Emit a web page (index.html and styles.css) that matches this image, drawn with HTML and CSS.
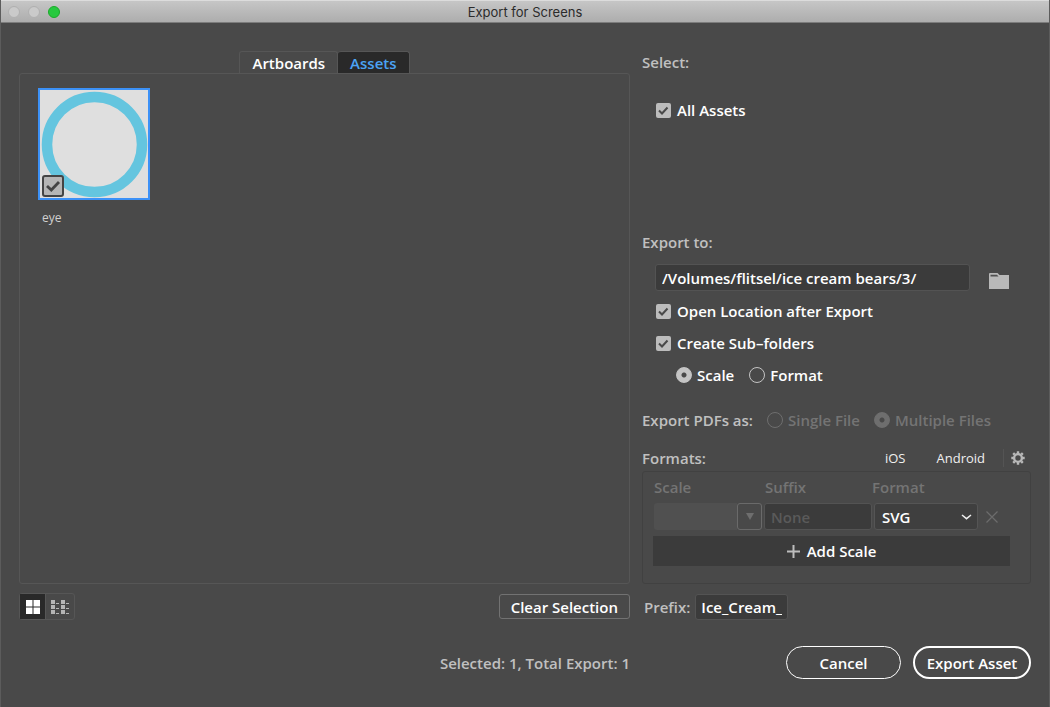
FILE: index.html
```
<!DOCTYPE html>
<html lang="en">
<head>
<meta charset="utf-8">
<title>Export for Screens</title>
<link rel="stylesheet" href="styles.css">
</head>
<body>
<div class="window">
  <header class="titlebar">
    <div class="lights">
      <button class="light" type="button" aria-label="Close"></button>
      <button class="light" type="button" aria-label="Minimize"></button>
      <button class="light light-zoom" type="button" aria-label="Zoom"></button>
    </div>
    <h1 class="title">Export for Screens</h1>
  </header>

  <main class="content">
    <section class="assets">
      <div class="tabs" role="tablist">
        <button class="tab" type="button" role="tab" aria-selected="false">Artboards</button>
        <button class="tab tab-active" type="button" role="tab" aria-selected="true">Assets</button>
      </div>
      <div class="asset-panel" role="tabpanel">
        <div class="asset">
          <div class="thumb">
            <svg class="thumb-art" viewBox="0 0 108 108" aria-hidden="true"><circle cx="54.500" cy="54.500" r="47.500" fill="none" stroke="#64c5df" stroke-width="10.500"/></svg>
            <span class="thumb-check">
              <input type="checkbox" id="eye" checked>
              <svg viewBox="0 0 22 22" aria-hidden="true"><path d="M5 11 L9.300 15 L17 7" fill="none" stroke="#444" stroke-width="2.800"/></svg>
            </span>
          </div>
          <label class="asset-name" for="eye">eye</label>
        </div>
      </div>
      <div class="assets-bar">
        <div class="views">
          <button class="view view-active" type="button" aria-label="Thumbnail view">
            <svg width="16" height="16" viewBox="0 0 16 16" aria-hidden="true"><path d="M1 1h6.500v6.500H1zM8.500 1H15v6.500H8.500zM1 8.500h6.500V15H1zM8.500 8.500H15V15H8.500z" fill="#fff"/></svg>
          </button>
          <button class="view" type="button" aria-label="List view">
            <svg width="20" height="16" viewBox="0 0 20 16" aria-hidden="true"><path d="M1 1h4v4H1zM1 6h4v4H1zM1 11h4v4H1zM11 1h4v4h-4zM11 6h4v4h-4zM11 11h4v4h-4zM6 4h3v1H6zM6 9h3v1H6zM6 14h3v1H6zM16 4h3v1h-3zM16 9h3v1h-3zM16 14h3v1h-3z" fill="#b5b5b5"/></svg>
          </button>
        </div>
        <button class="clear" type="button">Clear Selection</button>
      </div>
    </section>

    <section class="settings">
      <h2 class="heading">Select:</h2>
      <div class="select-options">
        <label class="option"><span class="check"><input type="checkbox" checked><svg viewBox="0 0 15 15" aria-hidden="true"><path d="M3 7.500 L6 10.500 L11.500 4.500"/></svg></span>All Assets</label>
      </div>

      <label class="heading" for="path">Export to:</label>
      <div class="path-row">
        <input class="field path" id="path" type="text" value="/Volumes/flitsel/ice cream bears/3/">
        <button class="folder" type="button" aria-label="Choose folder">
          <svg width="20" height="18" viewBox="0 0 20 18" aria-hidden="true"><path d="M0 2Q0 1 1 1H8.500L10.500 3H20V17H0Z" fill="#b9b9b9"/><path d="M1.500 2.800H8L9.500 4.600H1.500Z" fill="#505050"/></svg>
        </button>
      </div>
      <div class="export-options">
        <label class="option"><span class="check"><input type="checkbox" checked><svg viewBox="0 0 15 15" aria-hidden="true"><path d="M3 7.500 L6 10.500 L11.500 4.500"/></svg></span>Open Location after Export</label>
        <label class="option"><span class="check"><input type="checkbox" checked><svg viewBox="0 0 15 15" aria-hidden="true"><path d="M3 7.500 L6 10.500 L11.500 4.500"/></svg></span>Create Sub–folders</label>
        <div class="folder-kind">
          <label class="choice"><input class="radio" type="radio" name="kind" checked>Scale</label>
          <label class="choice"><input class="radio" type="radio" name="kind">Format</label>
        </div>
      </div>

      <div class="pdf-row">
        <span class="heading">Export PDFs as:</span>
        <label class="choice choice-off"><input class="radio" type="radio" name="pdf" disabled>Single File</label>
        <label class="choice choice-off"><input class="radio" type="radio" name="pdf" checked disabled>Multiple Files</label>
      </div>

      <div class="formats-head">
        <h2 class="heading">Formats:</h2>
        <div class="presets">
          <button class="preset" type="button">iOS</button>
          <button class="preset" type="button">Android</button>
          <button class="gear" type="button" aria-label="Advanced settings">
            <svg width="14" height="14" viewBox="-7 -7 14 14" aria-hidden="true"><circle r="3.900" fill="none" stroke="#b9b9b9" stroke-width="2.400"/><path d="M0-4.500V-6.700M0 4.500V6.700M-4.500 0H-6.700M4.500 0H6.700M-3.300-3.300L-4.800-4.800M3.300-3.300L4.800-4.800M-3.300 3.300L-4.800 4.800M3.300 3.300L4.800 4.800" stroke="#b9b9b9" stroke-width="2.400"/></svg>
          </button>
        </div>
      </div>
      <div class="formats">
        <div class="columns">
          <label for="scale">Scale</label>
          <label for="suffix">Suffix</label>
          <label for="format">Format</label>
        </div>
        <div class="format-row">
          <div class="scale">
            <input class="scale-value" id="scale" type="text" disabled>
            <button class="scale-menu" type="button" aria-label="Scale presets" disabled>
              <svg width="8" height="7" viewBox="0 0 8 7" aria-hidden="true"><path d="M0 0H8L4 7Z" fill="#6e6e6e"/></svg>
            </button>
          </div>
          <input class="field suffix" id="suffix" type="text" placeholder="None" disabled>
          <div class="format">
            <select class="format-select" id="format"><option>SVG</option></select>
            <svg class="chevron" width="11" height="6" viewBox="0 0 11 6" aria-hidden="true"><path d="M1 1L5.500 4.700L10 1" fill="none" stroke="#eee" stroke-width="1.500"/></svg>
          </div>
          <button class="remove" type="button" aria-label="Remove scale" disabled>
            <svg width="12" height="12" viewBox="0 0 12 12" aria-hidden="true"><path d="M0.500 0.500L11.500 11.500M11.500 0.500L0.500 11.500" stroke="#6c6c6c" stroke-width="1.200"/></svg>
          </button>
        </div>
        <button class="add" type="button">
          <svg width="13" height="13" viewBox="0 0 13 13" aria-hidden="true"><path d="M6.500 0V13M0 6.500H13" stroke="#bdbdbd" stroke-width="2"/></svg>
          Add Scale
        </button>
      </div>
      <div class="prefix-row">
        <label class="heading" for="prefix">Prefix:</label>
        <input class="field prefix" id="prefix" type="text" value="Ice_Cream_">
      </div>
    </section>
  </main>

  <footer class="footer">
    <p class="status">Selected: 1, Total Export: 1</p>
    <div class="actions">
      <button class="pill" type="button">Cancel</button>
      <button class="pill pill-primary" type="button">Export Asset</button>
    </div>
  </footer>
</div>
</body>
</html>
```
FILE: styles.css
```
* { box-sizing: border-box; }

body {
  margin: 0;
  background: #494949;
  color: #fff;
  font: 600 15px/20px "Open Sans", "Noto Sans", sans-serif;
}

button, input, select {
  margin: 0;
  padding: 0;
  border: 0;
  border-radius: 0;
  background: none;
  color: inherit;
  font: inherit;
}

svg { display: block; }

.window {
  display: flex;
  flex-direction: column;
  min-height: 100vh;
  border: solid #5c5c5c;
  border-width: 0 1px;
}

.titlebar {
  display: grid;
  grid-template-columns: 1fr auto 1fr;
  align-items: center;
  height: 23px;
  padding: 0 7px;
  border-top: 1px solid #dcdcdc;
  border-bottom: 1px solid #7c7c7c;
  background: linear-gradient(#c6c6c6, #adadad);
}

.lights { display: flex; gap: 8px; }

.light {
  width: 12px;
  height: 12px;
  border: 1px solid #b0b0b0;
  border-radius: 50%;
  background: #cacaca;
}

.light-zoom { border-color: #1aab29; background: #27c93f; }

.title {
  margin: 0;
  color: #2b2b2b;
  font: 400 13px/20px Inter, sans-serif;
}

.content {
  display: grid;
  flex: 1;
  grid-template-columns: minmax(0, 1fr) 389px;
  gap: 12px;
  padding: 28px 18px 0;
}

.assets, .settings { display: flex; flex-direction: column; }

.tabs { display: flex; justify-content: center; }

.tab {
  height: 22px;
  padding: 1px 12px 0;
  border: 1px solid #565656;
  border-bottom: 0;
  border-radius: 3px 3px 0 0;
}

.tab-active { border-left: 0; background: #292929; color: #4ba3f5; }

.asset-panel {
  flex: 1;
  padding: 14px 18px;
  border: 1px solid #565656;
  border-radius: 3px;
}

.asset { display: flex; flex-direction: column; width: 112px; }

.thumb {
  position: relative;
  height: 112px;
  border: 2px solid #3c91f7;
  background: #dfdfdf;
}

.thumb-art { width: 108px; height: 108px; }

.thumb-check {
  position: absolute;
  bottom: 1px;
  left: 2px;
  display: grid;
  width: 22px;
  height: 22px;
}

.thumb-check > *, .check > * { grid-area: 1 / 1; }

.thumb-check input {
  border: 2px solid #444;
  border-radius: 3px;
  appearance: none;
  background: #b5b5b5;
}

.thumb-check svg, .check svg { pointer-events: none; }

.asset-name {
  margin-top: 8px;
  padding-left: 4px;
  color: #d0d0d0;
  font-size: 12px;
  font-weight: 400;
}

.assets-bar {
  display: flex;
  align-items: center;
  justify-content: space-between;
  height: 27px;
  margin-top: 9px;
}

.views {
  display: flex;
  height: 27px;
  border: 1px solid #565656;
  border-radius: 3px;
}

.view { display: grid; place-items: center; width: 28px; }

.view-active { width: 26px; border-right: 1px solid #565656; background: #292929; }

.clear {
  height: 25px;
  padding: 0 11px;
  border: 1px solid #727272;
  border-radius: 3px;
}

.heading {
  margin: 0;
  color: #c0c0c0;
  font: inherit;
}

.select-options { margin: 28px 0 112px 14px; }

.settings > h2 { margin-top: 1px; }

.option { display: flex; align-items: center; gap: 6px; }

.check { display: grid; width: 15px; height: 15px; }

.check input { border-radius: 2px; appearance: none; background: #bcbcbc; }

.check path { fill: none; stroke: #494949; stroke-width: 2; }

.path-row {
  display: flex;
  align-items: center;
  justify-content: space-between;
  margin: 12px 22px 0 13px;
}

.field {
  height: 27px;
  min-width: 0;
  padding: 0 6px;
  border: 1px solid #535353;
  border-radius: 3px;
  background: #3b3b3b;
}

.path { flex: 1; margin-right: 19px; }

.folder { padding-top: 6px; }

.export-options {
  display: flex;
  flex-direction: column;
  gap: 12px;
  margin: 10px 0 0 14px;
}

.folder-kind { display: flex; gap: 15px; padding-left: 20px; }

.choice { display: flex; align-items: center; gap: 5px; }

.radio {
  width: 16px;
  height: 16px;
  border: 1px solid #c4c4c4;
  border-radius: 50%;
  appearance: none;
}

.radio:checked {
  background: radial-gradient(circle, #494949 0 2px, #c4c4c4 3px);
}

.choice-off { color: #747474; }

.radio:disabled { border-color: #6e6e6e; }

.radio:disabled:checked {
  background: radial-gradient(circle, #494949 0 2px, #6e6e6e 3px);
}

.pdf-row { display: flex; gap: 14px; margin-top: 25px; }

.formats-head { display: flex; justify-content: space-between; margin-top: 18px; }

.presets { display: flex; align-items: center; padding-right: 6px; }

.preset { margin-right: 31px; color: #f0f0f0; font-size: 13px; font-weight: 400; }

.preset + .preset { margin-right: 18px; }

.gear { height: 18px; padding-left: 7px; border-left: 1px solid #545454; }

.formats {
  height: 113px;
  margin-top: 3px;
  padding: 5px 20px 0 10px;
  border: 1px solid #414141;
  border-radius: 3px;
}

.columns {
  display: grid;
  grid-template-columns: 111px 107px 1fr;
  padding-left: 1px;
  color: #747474;
}

.format-row {
  display: grid;
  grid-template-columns: 108px 108px 104px 1fr;
  gap: 2px;
  margin-top: 6px;
  padding-left: 1px;
}

.scale { display: flex; min-width: 0; height: 27px; }

.scale-value { flex: 1; min-width: 0; border-radius: 3px 0 0 3px; background: #505050; }

.scale-menu {
  display: grid;
  place-items: center;
  width: 25px;
  border: 1px solid #6a6a6a;
  border-radius: 3px;
}

.suffix::placeholder { color: #5a5a5a; opacity: 1; }

.format { display: grid; align-items: center; }

.format > * { grid-area: 1 / 1; }

.format-select {
  height: 27px;
  padding: 0 7px;
  border: 1px solid #555;
  border-radius: 3px;
  appearance: none;
  background: #3f3f3f;
}

.chevron { justify-self: end; margin-right: 6px; pointer-events: none; }

.remove { display: grid; align-items: center; justify-self: start; padding-left: 6px; }

.add {
  display: flex;
  align-items: center;
  justify-content: center;
  gap: 7px;
  width: 100%;
  height: 30px;
  margin-top: 6px;
  background: #3b3b3b;
}

.prefix-row {
  display: flex;
  align-items: center;
  gap: 5px;
  height: 27px;
  margin: 9px 0 0 2px;
}

.prefix { width: 93px; height: 26px; padding: 0 5px; }

.footer {
  display: grid;
  grid-template-columns: minmax(0, 1fr) 389px;
  align-items: center;
  gap: 12px;
  padding: 26px 18px 28px;
}

.status { margin: 0; color: #c0c0c0; text-align: right; }

.actions { display: flex; justify-content: flex-end; gap: 12px; }

.pill {
  width: 115px;
  height: 33px;
  border: 1px solid #fff;
  border-radius: 17px;
}

.pill-primary { width: 118px; border-width: 2px; }
```
